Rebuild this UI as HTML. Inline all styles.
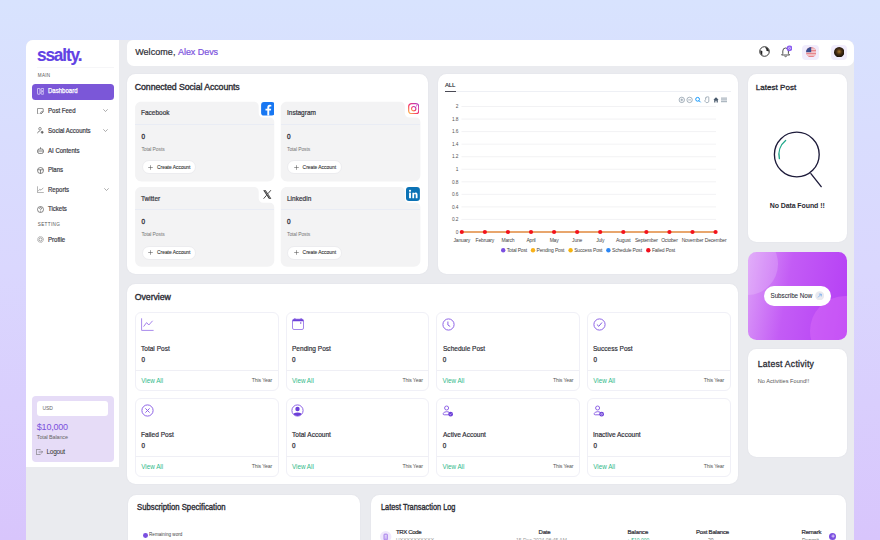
<!DOCTYPE html>
<html><head><meta charset="utf-8">
<style>
*{box-sizing:border-box;margin:0;padding:0}
html,body{width:880px;height:540px;overflow:hidden}
body{font-family:"Liberation Sans",sans-serif;background:linear-gradient(180deg,#d8e3fe 0%,#dad7fe 50%,#d8c5fc 100%);position:relative;color:#2b2b33}
.a{position:absolute}
.w{background:#fff}
.t{position:absolute;white-space:nowrap;line-height:1}
#cont{left:26px;top:40px;width:828px;height:520px;background:#eaebef;border-radius:7px 7px 0 0}
#side{left:26px;top:40px;width:93px;height:426.8px;background:#fff;border-radius:7px 0 0 0}
#head{left:127px;top:40px;width:727px;height:25.6px;background:#fff;border-radius:6px 8px 7px 7px}
.nav{font-size:6.6px;letter-spacing:0;transform:scaleX(0.915);transform-origin:0 0;color:#3a3a44;-webkit-text-stroke:0.2px #3a3a44}
.sc{background:#f3f3f4}
.sch{font-size:7px;letter-spacing:0;transform:scaleX(0.93);transform-origin:0 0;color:#33333b;-webkit-text-stroke:0.2px #33333b}
.scn{font-size:6.4px;color:#2e2e36;-webkit-text-stroke:0.3px #2e2e36}
.sct{font-size:5px;color:#777;letter-spacing:-0.12px}
.btn{width:54.5px;height:14.2px;background:#fff;border-radius:7.1px;border:0.5px solid #ececef}
.sbt{font-size:4.9px;color:#333;letter-spacing:0px;-webkit-text-stroke:0.1px #333}
.h2{font-size:8.8px;letter-spacing:-0.09px;color:#2b2b33;-webkit-text-stroke:0.35px #2b2b33}
.h3{font-size:8px;letter-spacing:0.05px;color:#2b2b33;-webkit-text-stroke:0.3px #2b2b33}
.stc{width:143.9px;border:0.8px solid #f0f0f7;border-radius:6px;background:#fff}
.stn{font-size:7.4px;letter-spacing:0;transform:scaleX(0.885);transform-origin:0 0;color:#2e2e36;-webkit-text-stroke:0.2px #2e2e36}
.stz{font-size:6.3px;color:#2e2e36;-webkit-text-stroke:0.25px #2e2e36}
.stv{font-size:6.3px;color:#2fb98a;letter-spacing:-0.02px}
.sty{font-size:5.2px;color:#555;letter-spacing:-0.14px}
.th{font-size:6px;color:#2e2e36;-webkit-text-stroke:0.2px #2e2e36}
.card{position:absolute;background:#fff;border-radius:8.5px;box-shadow:0 0 2px rgba(40,40,80,0.06)}
</style></head><body>
<div id="cont" class="a"></div>
<div id="side" class="a"></div>
<div id="head" class="a"></div>

<div class="card" style="left:127.3px;top:73.9px;width:300.7px;height:200px"></div>
<div class="card" style="left:437.8px;top:73.8px;width:300.4px;height:200.3px"></div>
<div class="card" style="left:748px;top:73.6px;width:98.8px;height:168.4px"></div>
<div class="card" style="left:748px;top:349px;width:98.8px;height:107.6px"></div>
<div class="card" style="left:126.7px;top:283.7px;width:611.4px;height:200.8px"></div>
<div class="card" style="left:127.8px;top:495.1px;width:232.7px;height:60px"></div>
<div class="card" style="left:371.3px;top:495.1px;width:475.1px;height:60px"></div>


<!-- SIDEBAR -->
<div class="t" style="left:37.3px;top:45.6px;font-size:18.3px;font-weight:bold;color:#6242e4;letter-spacing:-1.2px;-webkit-text-stroke:0.15px #6242e4;transform:scaleX(0.94);transform-origin:0 0">ssalty.</div>
<div class="a" style="left:37px;top:66.5px;width:77px;height:0.7px;background:#f6f6f8"></div>
<div class="t sm" style="left:37.8px;top:74.2px;font-size:4.6px;color:#555;letter-spacing:0.3px">MAIN</div>
<div class="a" style="left:32px;top:83.8px;width:82px;height:15.9px;background:#7b57d8;border-radius:3.5px"></div>
<svg class="a" style="left:37px;top:88.3px" width="7.2" height="6.6" viewBox="0 0 7.2 6.6"><g fill="none" stroke="#e6defa" stroke-width="0.8"><rect x="0.4" y="0.4" width="2.6" height="5.8" rx="0.5"/><rect x="4.1" y="0.4" width="2.7" height="2.5" rx="0.5"/><rect x="4.1" y="3.7" width="2.7" height="2.5" rx="0.5"/></g></svg>
<div class="t nav" style="left:47.8px;top:88.4px;color:#fff;-webkit-text-stroke:0.25px #fff">Dashboard</div>

<svg class="a" style="left:37.3px;top:107.6px" width="6.6" height="6.6" viewBox="0 0 6.6 6.6"><path d="M0.4 1 Q0.4 0.4 1 0.4 H5.6 Q6.2 0.4 6.2 1 V3.8 L3.8 6.2 H1 Q0.4 6.2 0.4 5.6 Z M6.2 3.8 H4.4 Q3.8 3.8 3.8 4.4 V6.2" fill="none" stroke="#666" stroke-width="0.75"/></svg>
<div class="t nav" style="left:48px;top:108.1px">Post Feed</div>
<svg class="a chev" style="left:102.8px;top:109.3px" width="5" height="3" viewBox="0 0 5 3"><path d="M0.3 0.3 L2.5 2.5 L4.7 0.3" fill="none" stroke="#777" stroke-width="0.6"/></svg>

<svg class="a" style="left:37.3px;top:127px" width="7" height="7" viewBox="0 0 7 7"><g fill="none" stroke="#666" stroke-width="0.7"><circle cx="3" cy="1.8" r="1.3"/><path d="M0.5 6.3 Q1 3.9 3.2 3.9"/><circle cx="5.2" cy="5.3" r="1" fill="#666"/></g></svg>
<div class="t nav" style="left:48px;top:127.9px">Social Accounts</div>
<svg class="a chev" style="left:102.8px;top:128.9px" width="5" height="3" viewBox="0 0 5 3"><path d="M0.3 0.3 L2.5 2.5 L4.7 0.3" fill="none" stroke="#777" stroke-width="0.6"/></svg>

<svg class="a" style="left:37.3px;top:146.8px" width="7" height="7" viewBox="0 0 7 7"><g fill="none" stroke="#555" stroke-width="0.75"><path d="M3.5 0.3 V1.8"/><rect x="0.6" y="2" width="5.8" height="4.4" rx="1.6"/><path d="M0.6 4 H6.4"/></g></svg>
<div class="t nav" style="left:48px;top:147.5px">AI Contents</div>

<svg class="a" style="left:37.3px;top:166.5px" width="7" height="7" viewBox="0 0 7 7"><g fill="none" stroke="#555" stroke-width="0.7"><circle cx="3.5" cy="3.5" r="3"/><path d="M0.6 2.8 H6.4 M3.5 2.8 V6.5"/></g></svg>
<div class="t nav" style="left:48px;top:167.0px">Plans</div>

<svg class="a" style="left:37.3px;top:186px" width="7" height="7" viewBox="0 0 7 7"><g fill="none" stroke="#777" stroke-width="0.6"><path d="M0.4 0.3 V6.6 H6.8"/><path d="M1.2 5.2 L2.8 3.2 L4 4.2 L6.3 1.8"/></g></svg>
<div class="t nav" style="left:48px;top:186.5px">Reports</div>
<svg class="a chev" style="left:103.8px;top:188px" width="5" height="3" viewBox="0 0 5 3"><path d="M0.3 0.3 L2.5 2.5 L4.7 0.3" fill="none" stroke="#777" stroke-width="0.6"/></svg>

<svg class="a" style="left:37.3px;top:205.8px" width="7" height="7" viewBox="0 0 7 7"><g fill="none" stroke="#555" stroke-width="0.7"><circle cx="3.5" cy="3.5" r="3"/><path d="M2.5 2.7 Q2.5 1.6 3.5 1.6 Q4.5 1.6 4.5 2.6 Q4.5 3.3 3.5 3.7 V4.3"/><path d="M3.5 5 V5.6" stroke-width="0.8"/></g></svg>
<div class="t nav" style="left:48px;top:206.3px">Tickets</div>

<div class="t sm" style="left:37.8px;top:222.6px;font-size:4.6px;color:#555;letter-spacing:0.35px">SETTING</div>

<svg class="a" style="left:37.3px;top:236.3px" width="7" height="7" viewBox="0 0 7 7"><g fill="none" stroke="#777" stroke-width="0.7"><circle cx="3.5" cy="3.5" r="2.9" stroke-dasharray="1 0.5"/><circle cx="3.5" cy="3.5" r="1.6"/></g></svg>
<div class="t nav" style="left:48px;top:236.8px">Profile</div>

<div class="a" style="left:32px;top:396.3px;width:81.6px;height:65.8px;background:#e6dcf7;border-radius:4px"></div>
<div class="a" style="left:36.8px;top:400.8px;width:71.7px;height:14.8px;background:#fff;border-radius:3px"></div>
<div class="t" style="left:42.4px;top:405.6px;font-size:5px;color:#666">USD</div>
<div class="t" style="left:36.8px;top:423px;font-size:9px;color:#7b52dd;letter-spacing:-0.2px">$10,000</div>
<div class="t" style="left:36.8px;top:434.8px;font-size:5.4px;color:#666;letter-spacing:-0.1px">Total Balance</div>
<svg class="a" style="left:36px;top:449.2px" width="7" height="6" viewBox="0 0 7 6"><g fill="none" stroke="#666" stroke-width="0.6"><path d="M4.2 1.2 V0.4 H0.4 V5.6 H4.2 V4.8"/><path d="M2.5 3 H6.6 M5.4 1.8 L6.6 3 L5.4 4.2"/></g></svg>
<div class="t" style="left:46.5px;top:448.9px;font-size:6.6px;color:#333;letter-spacing:-0.3px">Logout</div>


<!-- CONNECTED SOCIAL -->
<div class="t h2" style="left:134.8px;top:82.6px">Connected Social Accounts</div>

<svg class="a" style="left:0;top:0" width="880" height="540"><path d="M141.10,101.80 H254.20 C256.69,101.80 258.70,103.81 258.70,106.30 V113.10 C258.70,115.59 260.71,117.60 263.20,117.60 H269.80 C272.29,117.60 274.30,119.61 274.30,122.10 V175.10 C274.30,178.69 271.39,181.60 267.80,181.60 H141.60 C138.01,181.60 135.10,178.69 135.10,175.10 V107.80 C135.10,104.49 137.79,101.80 141.10,101.80 Z" fill="#f3f3f4"/></svg>
<div class="a" style="left:135.1px;top:123.7px;width:138.9px;height:0.8px;background:#e9ecf4"></div>
<div class="t sch" style="left:141.4px;top:109.3px">Facebook</div>
<div class="t scn" style="left:141.5px;top:134.1px">0</div>
<div class="t sct" style="left:141.4px;top:147.1px">Total Posts</div>
<div class="a btn" style="left:141.7px;top:160.3px"></div>
<svg class="a" style="left:147.9px;top:164.7px" width="5" height="5" viewBox="0 0 5 5"><path d="M2.5 0.2 V4.8 M0.2 2.5 H4.8" stroke="#555" stroke-width="0.55"/></svg>
<div class="t sbt" style="left:157.0px;top:166.1px">Create Account</div>
<svg class="a" style="left:260.7px;top:102.3px" width="13.8" height="13.6" viewBox="0 0 14 14"><rect width="14" height="14" rx="3" fill="#1877f2"/><path d="M8.4 14 V8.8 H10.1 L10.4 7 H8.4 V5.7 Q8.4 4.6 9.5 4.6 H10.5 V3 Q9.7 2.8 8.9 2.8 Q6.4 2.8 6.4 5.4 V7 H4.5 V8.8 H6.4 V14 Z" fill="#fff"/></svg>


<svg class="a" style="left:0;top:0" width="880" height="540"><path d="M286.70,101.80 H400.30 C402.79,101.80 404.80,103.81 404.80,106.30 V113.10 C404.80,115.59 406.81,117.60 409.30,117.60 H415.90 C418.39,117.60 420.40,119.61 420.40,122.10 V175.10 C420.40,178.69 417.49,181.60 413.90,181.60 H287.20 C283.61,181.60 280.70,178.69 280.70,175.10 V107.80 C280.70,104.49 283.39,101.80 286.70,101.80 Z" fill="#f3f3f4"/></svg>
<div class="a" style="left:280.7px;top:123.7px;width:139.5px;height:0.8px;background:#e9ecf4"></div>
<div class="t sch" style="left:287.0px;top:109.3px">Instagram</div>
<div class="t scn" style="left:287.1px;top:134.1px">0</div>
<div class="t sct" style="left:287.0px;top:147.1px">Total Posts</div>
<div class="a btn" style="left:287.3px;top:160.3px"></div>
<svg class="a" style="left:293.5px;top:164.7px" width="5" height="5" viewBox="0 0 5 5"><path d="M2.5 0.2 V4.8 M0.2 2.5 H4.8" stroke="#555" stroke-width="0.55"/></svg>
<div class="t sbt" style="left:302.6px;top:166.1px">Create Account</div>
<svg class="a" style="left:407.8px;top:102.9px" width="11.4" height="11.4" viewBox="0 0 12 12"><defs><linearGradient id="igg" x1="0" y1="1" x2="1" y2="0"><stop offset="0" stop-color="#fdc14a"/><stop offset="0.45" stop-color="#f5336b"/><stop offset="1" stop-color="#b13fc9"/></linearGradient></defs><rect x="0.7" y="0.7" width="10.6" height="10.6" rx="3" fill="none" stroke="url(#igg)" stroke-width="1.3"/><circle cx="6" cy="6" r="2.3" fill="none" stroke="url(#igg)" stroke-width="1.2"/><circle cx="9" cy="3" r="0.6" fill="#d53a9d"/></svg>


<svg class="a" style="left:0;top:0" width="880" height="540"><path d="M141.10,187.00 H254.20 C256.69,187.00 258.70,189.01 258.70,191.50 V198.30 C258.70,200.79 260.71,202.80 263.20,202.80 H269.80 C272.29,202.80 274.30,204.81 274.30,207.30 V260.30 C274.30,263.89 271.39,266.80 267.80,266.80 H141.60 C138.01,266.80 135.10,263.89 135.10,260.30 V193.00 C135.10,189.69 137.79,187.00 141.10,187.00 Z" fill="#f3f3f4"/></svg>
<div class="a" style="left:135.1px;top:208.9px;width:138.9px;height:0.8px;background:#e9ecf4"></div>
<div class="t sch" style="left:141.4px;top:194.5px">Twitter</div>
<div class="t scn" style="left:141.5px;top:219.3px">0</div>
<div class="t sct" style="left:141.4px;top:232.3px">Total Posts</div>
<div class="a btn" style="left:141.7px;top:245.5px"></div>
<svg class="a" style="left:147.9px;top:249.9px" width="5" height="5" viewBox="0 0 5 5"><path d="M2.5 0.2 V4.8 M0.2 2.5 H4.8" stroke="#555" stroke-width="0.55"/></svg>
<div class="t sbt" style="left:157.0px;top:251.3px">Create Account</div>
<svg class="a" style="left:263px;top:190px" width="8.6" height="8.9" viewBox="0 0 8.6 8.9"><path d="M0.2 0.2 H2.7 L8.4 8.7 H5.9 Z" fill="#2a2a2a"/><path d="M1.9 0.9 L7 8 " stroke="#f3f3f4" stroke-width="0.5"/><path d="M7.9 0.2 L4.9 3.7 M0.6 8.7 L3.6 5.2" stroke="#2a2a2a" stroke-width="0.85"/></svg>


<svg class="a" style="left:0;top:0" width="880" height="540"><path d="M286.70,187.00 H400.30 C402.79,187.00 404.80,189.01 404.80,191.50 V198.30 C404.80,200.79 406.81,202.80 409.30,202.80 H415.90 C418.39,202.80 420.40,204.81 420.40,207.30 V260.30 C420.40,263.89 417.49,266.80 413.90,266.80 H287.20 C283.61,266.80 280.70,263.89 280.70,260.30 V193.00 C280.70,189.69 283.39,187.00 286.70,187.00 Z" fill="#f3f3f4"/></svg>
<div class="a" style="left:280.7px;top:208.9px;width:139.5px;height:0.8px;background:#e9ecf4"></div>
<div class="t sch" style="left:287.0px;top:194.5px">Linkedin</div>
<div class="t scn" style="left:287.1px;top:219.3px">0</div>
<div class="t sct" style="left:287.0px;top:232.3px">Total Posts</div>
<div class="a btn" style="left:287.3px;top:245.5px"></div>
<svg class="a" style="left:293.5px;top:249.9px" width="5" height="5" viewBox="0 0 5 5"><path d="M2.5 0.2 V4.8 M0.2 2.5 H4.8" stroke="#555" stroke-width="0.55"/></svg>
<div class="t sbt" style="left:302.6px;top:251.3px">Create Account</div>
<svg class="a" style="left:406.1px;top:187.4px" width="13.9" height="14.1" viewBox="0 0 14 14"><rect width="14" height="14" rx="3" fill="#0b72b5"/><rect x="3.1" y="5.6" width="1.9" height="5.6" fill="#fff"/><circle cx="4.05" cy="3.8" r="1.1" fill="#fff"/><path d="M6.4 5.6 H8.2 V6.4 Q8.8 5.4 10 5.4 Q11.6 5.4 11.6 7.4 V11.2 H9.8 V7.9 Q9.8 6.9 9 6.9 Q8.2 6.9 8.2 7.9 V11.2 H6.4 Z" fill="#fff"/></svg>



<!-- HEADER -->
<div class="t" style="left:135.2px;top:47.7px;font-size:9px;color:#2e2e36;letter-spacing:0.05px;-webkit-text-stroke:0.2px #2e2e36">Welcome, <span style="color:#7b52dd;-webkit-text-stroke:0.2px #7b52dd;letter-spacing:-0.05px">Alex Devs</span></div>
<svg class="a" style="left:758.8px;top:46.2px" width="11" height="11" viewBox="0 0 11 11"><circle cx="5.5" cy="5.5" r="4.8" fill="none" stroke="#222" stroke-width="0.9"/><path d="M1.2 4.6 Q2.4 4.3 3.1 5 Q3.7 5.7 3.3 6.6 Q3.1 7.6 3.5 9.4 Q2.2 8.7 1.5 7.2 Z" fill="#222"/><path d="M6.4 1 Q6.2 2 6.8 2.5 Q7.6 3 7.3 3.9 Q7.2 4.7 8.1 5 Q9.2 5.3 9.9 5.8 Q10 4.5 9.4 3.2 Q8.4 1.4 6.4 1 Z" fill="#222"/></svg>
<svg class="a" style="left:780px;top:44.6px" width="12" height="13" viewBox="0 0 12 13"><path d="M5.6 3 Q2.8 3 2.8 6 V8.5 L1.6 10 H9.6 L8.4 8.5 V6 Q8.4 3 5.6 3 Z M4.5 11.2 Q5.6 12.2 6.7 11.2" fill="none" stroke="#333" stroke-width="0.85" stroke-linejoin="round"/><circle cx="9.5" cy="3.3" r="2.9" fill="#8b5cf0"/><circle cx="9.5" cy="3.3" r="1" fill="none" stroke="#fff" stroke-width="0.55"/></svg>
<div class="a" style="left:802.4px;top:44.5px;width:16.6px;height:15.6px;background:#f1ecfc;border-radius:4px"></div>
<svg class="a" style="left:805.6px;top:46.6px" width="10.4" height="10.4" viewBox="0 0 10 10"><defs><clipPath id="fc"><circle cx="5" cy="5" r="5"/></clipPath></defs><g clip-path="url(#fc)"><rect width="10" height="10" fill="#e8848c"/><rect y="1.4" width="10" height="1.4" fill="#f5d5d8"/><rect y="4.2" width="10" height="1.4" fill="#f5d5d8"/><rect y="7" width="10" height="1.4" fill="#f5d5d8"/><rect width="5" height="5" fill="#3a4d8f"/></g></svg>
<div class="a" style="left:831.2px;top:44.5px;width:15.4px;height:15.6px;background:#f1ecfc;border-radius:4px"></div>
<svg class="a" style="left:833.8px;top:46.6px" width="10.4" height="10.4" viewBox="0 0 10 10"><defs><radialGradient id="av" cx="0.5" cy="0.45" r="0.55"><stop offset="0" stop-color="#a8772f"/><stop offset="0.45" stop-color="#4a3015"/><stop offset="1" stop-color="#120c07"/></radialGradient></defs><circle cx="5" cy="5" r="5" fill="url(#av)"/></svg>


<!-- CHART -->
<div class="t" style="left:445px;top:82.1px;font-size:6px;color:#2e2e36;letter-spacing:-0.15px;-webkit-text-stroke:0.15px #2e2e36">ALL</div>
<div class="a" style="left:445px;top:90.9px;width:285.5px;height:0.7px;background:#eef0f5"></div>
<div class="a" style="left:445px;top:90.8px;width:10.7px;height:1px;background:#4a4a55"></div>
<svg class="a" style="left:0;top:0" width="880" height="540" viewBox="0 0 880 540">
<line x1="461.5" y1="106.50" x2="716" y2="106.50" stroke="#ececef" stroke-width="0.7"/>
<text x="458.3" y="108.20" font-size="4.8" fill="#555" text-anchor="end" letter-spacing="-0.1">2</text>
<line x1="461.5" y1="119.05" x2="716" y2="119.05" stroke="#ececef" stroke-width="0.7"/>
<text x="458.3" y="120.75" font-size="4.8" fill="#555" text-anchor="end" letter-spacing="-0.1">1.8</text>
<line x1="461.5" y1="131.60" x2="716" y2="131.60" stroke="#ececef" stroke-width="0.7"/>
<text x="458.3" y="133.30" font-size="4.8" fill="#555" text-anchor="end" letter-spacing="-0.1">1.6</text>
<line x1="461.5" y1="144.15" x2="716" y2="144.15" stroke="#ececef" stroke-width="0.7"/>
<text x="458.3" y="145.85" font-size="4.8" fill="#555" text-anchor="end" letter-spacing="-0.1">1.4</text>
<line x1="461.5" y1="156.70" x2="716" y2="156.70" stroke="#ececef" stroke-width="0.7"/>
<text x="458.3" y="158.40" font-size="4.8" fill="#555" text-anchor="end" letter-spacing="-0.1">1.2</text>
<line x1="461.5" y1="169.25" x2="716" y2="169.25" stroke="#ececef" stroke-width="0.7"/>
<text x="458.3" y="170.95" font-size="4.8" fill="#555" text-anchor="end" letter-spacing="-0.1">1</text>
<line x1="461.5" y1="181.80" x2="716" y2="181.80" stroke="#ececef" stroke-width="0.7"/>
<text x="458.3" y="183.50" font-size="4.8" fill="#555" text-anchor="end" letter-spacing="-0.1">0.8</text>
<line x1="461.5" y1="194.35" x2="716" y2="194.35" stroke="#ececef" stroke-width="0.7"/>
<text x="458.3" y="196.05" font-size="4.8" fill="#555" text-anchor="end" letter-spacing="-0.1">0.6</text>
<line x1="461.5" y1="206.90" x2="716" y2="206.90" stroke="#ececef" stroke-width="0.7"/>
<text x="458.3" y="208.60" font-size="4.8" fill="#555" text-anchor="end" letter-spacing="-0.1">0.4</text>
<line x1="461.5" y1="219.45" x2="716" y2="219.45" stroke="#ececef" stroke-width="0.7"/>
<text x="458.3" y="221.15" font-size="4.8" fill="#555" text-anchor="end" letter-spacing="-0.1">0.2</text>
<text x="458.3" y="233.70" font-size="4.8" fill="#555" text-anchor="end" letter-spacing="-0.1">0</text>
<line x1="461.5" y1="232.00" x2="716" y2="232.00" stroke="#e0883c" stroke-width="1.3"/>
<circle cx="461.80" cy="232.00" r="2.1" fill="#f3121c"/>
<text x="461.80" y="241.60" font-size="5" fill="#444" text-anchor="middle" letter-spacing="-0.18">January</text>
<circle cx="484.87" cy="232.00" r="2.1" fill="#f3121c"/>
<text x="484.87" y="241.60" font-size="5" fill="#444" text-anchor="middle" letter-spacing="-0.18">February</text>
<circle cx="507.94" cy="232.00" r="2.1" fill="#f3121c"/>
<text x="507.94" y="241.60" font-size="5" fill="#444" text-anchor="middle" letter-spacing="-0.18">March</text>
<circle cx="531.01" cy="232.00" r="2.1" fill="#f3121c"/>
<text x="531.01" y="241.60" font-size="5" fill="#444" text-anchor="middle" letter-spacing="-0.18">April</text>
<circle cx="554.08" cy="232.00" r="2.1" fill="#f3121c"/>
<text x="554.08" y="241.60" font-size="5" fill="#444" text-anchor="middle" letter-spacing="-0.18">May</text>
<circle cx="577.15" cy="232.00" r="2.1" fill="#f3121c"/>
<text x="577.15" y="241.60" font-size="5" fill="#444" text-anchor="middle" letter-spacing="-0.18">June</text>
<circle cx="600.22" cy="232.00" r="2.1" fill="#f3121c"/>
<text x="600.22" y="241.60" font-size="5" fill="#444" text-anchor="middle" letter-spacing="-0.18">July</text>
<circle cx="623.29" cy="232.00" r="2.1" fill="#f3121c"/>
<text x="623.29" y="241.60" font-size="5" fill="#444" text-anchor="middle" letter-spacing="-0.18">August</text>
<circle cx="646.36" cy="232.00" r="2.1" fill="#f3121c"/>
<text x="646.36" y="241.60" font-size="5" fill="#444" text-anchor="middle" letter-spacing="-0.18">September</text>
<circle cx="669.43" cy="232.00" r="2.1" fill="#f3121c"/>
<text x="669.43" y="241.60" font-size="5" fill="#444" text-anchor="middle" letter-spacing="-0.18">October</text>
<circle cx="692.50" cy="232.00" r="2.1" fill="#f3121c"/>
<text x="692.50" y="241.60" font-size="5" fill="#444" text-anchor="middle" letter-spacing="-0.18">November</text>
<circle cx="715.57" cy="232.00" r="2.1" fill="#f3121c"/>
<text x="715.57" y="241.60" font-size="5" fill="#444" text-anchor="middle" letter-spacing="-0.18">December</text>
<circle cx="503.2" cy="250.2" r="2.2" fill="#7b4fe0"/>
<text x="506.8" y="252" font-size="5" fill="#444" letter-spacing="-0.18">Total Post</text>
<circle cx="533" cy="250.2" r="2.2" fill="#f8b21a"/>
<text x="536.6" y="252" font-size="5" fill="#444" letter-spacing="-0.18">Pending Post</text>
<circle cx="570.6" cy="250.2" r="2.2" fill="#f5b30f"/>
<text x="574.2" y="252" font-size="5" fill="#444" letter-spacing="-0.18">Success Post</text>
<circle cx="608.4" cy="250.2" r="2.2" fill="#2a86f5"/>
<text x="612.0" y="252" font-size="5" fill="#444" letter-spacing="-0.18">Schedule Post</text>
<circle cx="648.3" cy="250.2" r="2.2" fill="#f00f1c"/>
<text x="651.9" y="252" font-size="5" fill="#444" letter-spacing="-0.18">Failed Post</text>
<g fill="none" stroke="#6e8192" stroke-width="0.6"><circle cx="681.8" cy="99.9" r="2.7"/><path d="M680.4 99.9 H683.2 M681.8 98.5 V101.3"/><circle cx="689.6" cy="99.9" r="2.7"/><path d="M688.2 99.9 H691"/></g>
<g fill="none" stroke="#008ffb" stroke-width="0.9"><circle cx="697.6" cy="99.3" r="1.9"/><path d="M699 100.7 L700.6 102.3"/></g>
<path d="M704.6 101 L705.6 99.6 V97.6 Q706 97 706.4 97.6 V97 Q706.8 96.4 707.2 97 Q707.6 96.4 708 97 Q708.4 96.6 708.8 97.2 V101.2 Q708.6 102.6 707.2 102.6 H706.2 Z" fill="none" stroke="#6e8192" stroke-width="0.6"/>
<path d="M713.4 99.8 L716 97.2 L718.6 99.8 H717.8 V102.6 H716.6 V100.8 H715.4 V102.6 H714.2 V99.8 Z" fill="#4a5b6d"/>
<g stroke="#6e8192" stroke-width="0.7"><path d="M721 98.1 H727 M721 99.9 H727 M721 101.7 H727"/></g>
</svg>

<!-- LATEST POST -->
<div class="t h3" style="left:755.7px;top:83.9px">Latest Post</div>
<svg class="a" style="left:770px;top:128px" width="56" height="62" viewBox="770 128 56 62"><circle cx="796.8" cy="154.5" r="22.4" fill="none" stroke="#1d1b3a" stroke-width="1.35"/><path d="M810.9 173.6 L821.2 186.6" stroke="#1d1b3a" stroke-width="1.35" stroke-linecap="round"/><path d="M785.6 140.4 A18.2 18.2 0 0 0 779.4 158.6" fill="none" stroke="#1fa88a" stroke-width="1.35" stroke-linecap="round"/></svg>
<div class="t" style="left:769.7px;top:202.1px;font-size:7px;font-weight:bold;color:#2b2b33;letter-spacing:-0.09px">No Data Found !!</div>

<!-- SUBSCRIBE -->
<div class="a" style="left:747.6px;top:251.5px;width:99.4px;height:88.3px;border-radius:8.5px;overflow:hidden;background:linear-gradient(100deg,#dc9ef8 0%,#c35cf5 40%,#b53ef5 100%)">
 <div class="a" style="left:-31.6px;top:-18.5px;width:61.6px;height:61.6px;border-radius:50%;background:rgba(255,255,255,0.17)"></div>
 <div class="a" style="left:62px;top:44px;width:70px;height:70px;border-radius:50%;background:rgba(230,120,250,0.35)"></div>
</div>
<div class="a" style="left:763.5px;top:285.5px;width:67.7px;height:20.5px;border-radius:10.25px;background:#fff"></div>
<div class="t" style="left:770.5px;top:292.9px;font-size:6.3px;color:#33333b;letter-spacing:-0.05px;-webkit-text-stroke:0.08px #33333b">Subscribe Now</div>
<svg class="a" style="left:815px;top:291px" width="9.4" height="9.4" viewBox="0 0 10 10"><circle cx="5" cy="5" r="4.8" fill="#e9e9ef"/><path d="M3.2 6.8 L6.6 3.4 M4.2 3.3 H6.7 V5.8" fill="none" stroke="#5ea2ee" stroke-width="0.7"/></svg>

<!-- LATEST ACTIVITY -->
<div class="t h3" style="left:757.8px;top:360.2px;font-size:8.6px;letter-spacing:0.25px">Latest Activity</div>
<div class="t" style="left:757.8px;top:379.4px;font-size:5.6px;color:#555;letter-spacing:0.02px">No Activities Found!!</div>


<!-- OVERVIEW -->
<div class="t h2" style="left:134.8px;top:293.3px">Overview</div>
<div class="a stc" style="left:134.8px;top:312.2px;height:79.2px"></div>
<svg class="a" style="left:140.8px;top:318.2px" width="13" height="13" viewBox="0 0 13 13"><path d="M0.6 0.3 V12.4 H12.6" fill="none" stroke="#a98bec" stroke-width="1"/><path d="M2.6 8.6 L5.6 4.6 L7.8 7 L11.6 2.8" fill="none" stroke="#8e63e6" stroke-width="0.8"/></svg>
<div class="t stn" style="left:141.3px;top:345.0px">Total Post</div>
<div class="t stz" style="left:141.4px;top:357.0px">0</div>
<div class="a" style="left:135.3px;top:369.6px;width:142.7px;height:0.7px;background:#efeff5"></div>
<div class="t stv" style="left:141.3px;top:378.2px">View All</div>
<div class="t sty" style="left:251.7px;top:378.3px">This Year</div>
<div class="a stc" style="left:285.5px;top:312.2px;height:79.2px"></div>
<svg class="a" style="left:291.5px;top:318.2px" width="12" height="12" viewBox="0 0 12 12"><rect x="0.5" y="1.2" width="11" height="10.3" rx="1.5" fill="none" stroke="#9a78e8" stroke-width="0.9"/><path d="M0.5 2.7 Q0.5 1.2 2 1.2 H10 Q11.5 1.2 11.5 2.7 V3.3 H0.5 Z" fill="#6c3fd8"/><path d="M2.9 0.2 V1.6 M9.1 0.2 V1.6" stroke="#6c3fd8" stroke-width="0.9"/><rect x="8.2" y="4.3" width="1.1" height="1.4" fill="#6c3fd8"/></svg>
<div class="t stn" style="left:292.0px;top:345.0px">Pending Post</div>
<div class="t stz" style="left:292.1px;top:357.0px">0</div>
<div class="a" style="left:286.0px;top:369.6px;width:142.7px;height:0.7px;background:#efeff5"></div>
<div class="t stv" style="left:292.0px;top:378.2px">View All</div>
<div class="t sty" style="left:402.4px;top:378.3px">This Year</div>
<div class="a stc" style="left:436.1px;top:312.2px;height:79.2px"></div>
<svg class="a" style="left:442.1px;top:318.2px" width="13" height="13" viewBox="0 0 13 13"><circle cx="6.5" cy="6.5" r="5.6" fill="none" stroke="#8e63e6" stroke-width="1"/><path d="M5.9 3.5 V7 L8.2 8.5" fill="none" stroke="#8e63e6" stroke-width="1"/></svg>
<div class="t stn" style="left:442.6px;top:345.0px">Schedule Post</div>
<div class="t stz" style="left:442.7px;top:357.0px">0</div>
<div class="a" style="left:436.6px;top:369.6px;width:142.7px;height:0.7px;background:#efeff5"></div>
<div class="t stv" style="left:442.6px;top:378.2px">View All</div>
<div class="t sty" style="left:553.0px;top:378.3px">This Year</div>
<div class="a stc" style="left:586.8px;top:312.2px;height:79.2px"></div>
<svg class="a" style="left:592.8px;top:318.2px" width="13" height="13" viewBox="0 0 13 13"><circle cx="6.5" cy="6.5" r="5.6" fill="none" stroke="#8e63e6" stroke-width="1"/><path d="M3.9 6.5 L5.8 8.3 L9 4.5" fill="none" stroke="#7448dc" stroke-width="0.9"/></svg>
<div class="t stn" style="left:593.3px;top:345.0px">Success Post</div>
<div class="t stz" style="left:593.4px;top:357.0px">0</div>
<div class="a" style="left:587.3px;top:369.6px;width:142.7px;height:0.7px;background:#efeff5"></div>
<div class="t stv" style="left:593.3px;top:378.2px">View All</div>
<div class="t sty" style="left:703.7px;top:378.3px">This Year</div>
<div class="a stc" style="left:134.8px;top:398.2px;height:79px"></div>
<svg class="a" style="left:140.8px;top:403.5px" width="13" height="13" viewBox="0 0 13 13"><circle cx="6.5" cy="6.5" r="5.6" fill="none" stroke="#8e63e6" stroke-width="1"/><path d="M4.4 4.4 L8.6 8.6 M8.6 4.4 L4.4 8.6" stroke="#8e63e6" stroke-width="1"/></svg>
<div class="t stn" style="left:141.3px;top:430.7px">Failed Post</div>
<div class="t stz" style="left:141.4px;top:443.3px">0</div>
<div class="a" style="left:135.3px;top:455.8px;width:142.7px;height:0.7px;background:#efeff5"></div>
<div class="t stv" style="left:141.3px;top:463.6px">View All</div>
<div class="t sty" style="left:251.7px;top:463.7px">This Year</div>
<div class="a stc" style="left:285.5px;top:398.2px;height:79px"></div>
<svg class="a" style="left:291px;top:403.5px" width="13" height="13" viewBox="0 0 13 13"><defs><clipPath id="accA"><circle cx="6.5" cy="6.5" r="5.4"/></clipPath></defs><circle cx="6.5" cy="6.5" r="5.6" fill="none" stroke="#8e63e6" stroke-width="1"/><circle cx="6.5" cy="5" r="2.2" fill="#6c3fd8"/><ellipse cx="6.5" cy="11.6" rx="4.5" ry="3.2" fill="#6c3fd8" clip-path="url(#accA)"/></svg>
<div class="t stn" style="left:292.0px;top:430.7px">Total Account</div>
<div class="t stz" style="left:292.1px;top:443.3px">0</div>
<div class="a" style="left:286.0px;top:455.8px;width:142.7px;height:0.7px;background:#efeff5"></div>
<div class="t stv" style="left:292.0px;top:463.6px">View All</div>
<div class="t sty" style="left:402.4px;top:463.7px">This Year</div>
<div class="a stc" style="left:436.1px;top:398.2px;height:79px"></div>
<svg class="a" style="left:442.4px;top:404.8px" width="12" height="12" viewBox="0 0 12 12"><circle cx="4.6" cy="3" r="2" fill="none" stroke="#8e63e6" stroke-width="1"/><path d="M7 7.2 Q6 6.7 4.6 6.7 Q1.8 6.7 1.2 8.6 Q0.9 9.8 2.2 9.8 H6" fill="none" stroke="#8e63e6" stroke-width="1"/><circle cx="8.6" cy="9.2" r="2.4" fill="#6c3fd8"/><path d="M7.6 9.3 L8.3 9.9 L9.6 8.5" fill="none" stroke="#fff" stroke-width="0.5"/></svg>
<div class="t stn" style="left:442.6px;top:430.7px">Active Account</div>
<div class="t stz" style="left:442.7px;top:443.3px">0</div>
<div class="a" style="left:436.6px;top:455.8px;width:142.7px;height:0.7px;background:#efeff5"></div>
<div class="t stv" style="left:442.6px;top:463.6px">View All</div>
<div class="t sty" style="left:553.0px;top:463.7px">This Year</div>
<div class="a stc" style="left:586.8px;top:398.2px;height:79px"></div>
<svg class="a" style="left:593.1px;top:404.8px" width="12" height="12" viewBox="0 0 12 12"><circle cx="4.6" cy="3" r="2" fill="none" stroke="#8e63e6" stroke-width="1"/><path d="M7 7.2 Q6 6.7 4.6 6.7 Q1.8 6.7 1.2 8.6 Q0.9 9.8 2.2 9.8 H6" fill="none" stroke="#8e63e6" stroke-width="1"/><circle cx="8.6" cy="9.2" r="2.4" fill="#6c3fd8"/><circle cx="8.6" cy="9.2" r="0.9" fill="none" stroke="#fff" stroke-width="0.5"/></svg>
<div class="t stn" style="left:593.3px;top:430.7px">Inactive Account</div>
<div class="t stz" style="left:593.4px;top:443.3px">0</div>
<div class="a" style="left:587.3px;top:455.8px;width:142.7px;height:0.7px;background:#efeff5"></div>
<div class="t stv" style="left:593.3px;top:463.6px">View All</div>
<div class="t sty" style="left:703.7px;top:463.7px">This Year</div>

<!-- BOTTOM -->
<div class="t h2" style="left:137.4px;top:503px;font-size:8.6px;letter-spacing:0;transform:scaleX(0.9);transform-origin:0 0">Subscription Specification</div>
<div class="a" style="left:143px;top:533.3px;width:4.8px;height:4.8px;border-radius:50%;background:#7b4fe0"></div>
<div class="t" style="left:149.2px;top:532.1px;font-size:5.3px;color:#444;letter-spacing:0;transform:scaleX(0.87);transform-origin:0 0">Remaining word</div>

<div class="t h2" style="left:380.5px;top:503.2px;font-size:8.6px;letter-spacing:0;transform:scaleX(0.856);transform-origin:0 0">Latest Transaction Log</div>
<svg class="a" style="left:380.2px;top:530.7px" width="11.4" height="11.4" viewBox="0 0 11.4 11.4"><circle cx="5.7" cy="5.7" r="5.7" fill="#efe7fc"/><rect x="3.9" y="3" width="3.6" height="6" rx="0.9" fill="#c9b0f4" stroke="#9a6be8" stroke-width="0.6"/><path d="M4.8 4.6 H6.6 M4.8 6 H6.6" stroke="#fff" stroke-width="0.5"/></svg>
<div class="t th" style="left:396px;top:528.8px;letter-spacing:-0.34px">TRX Code</div>
<div class="t th" style="left:538.5px;top:528.6px;letter-spacing:-0.2px">Date</div>
<div class="t th" style="left:627.5px;top:528.6px;letter-spacing:-0.15px">Balance</div>
<div class="t th" style="left:696px;top:528.6px;letter-spacing:-0.21px">Post Balance</div>
<div class="t th" style="left:801.5px;top:528.6px;letter-spacing:-0.2px">Remark</div>
<div class="t" style="left:396px;top:538.3px;font-size:5px;color:#999;letter-spacing:0.1px">UXXXXXXXXXX</div>
<div class="t" style="left:516px;top:538.3px;font-size:5px;color:#999;letter-spacing:0px">15 Dec 2024 08:45 AM</div>
<div class="t" style="left:627px;top:538.3px;font-size:5px;color:#35b58a">+ $10,000</div>
<div class="t" style="left:708px;top:538.3px;font-size:5px;color:#666">20</div>
<div class="t" style="left:802px;top:538.3px;font-size:5px;color:#666">Deposit</div>
<div class="a" style="left:828.8px;top:532.7px;width:7.6px;height:7.6px;border-radius:50%;background:#7b4fe0"></div>
<svg class="a" style="left:830.5px;top:534.4px" width="4.2" height="4.2" viewBox="0 0 4 4"><path d="M2 0.4 V3.6 M0.4 2 H3.6" stroke="#fff" stroke-width="0.6"/></svg>

</body></html>
